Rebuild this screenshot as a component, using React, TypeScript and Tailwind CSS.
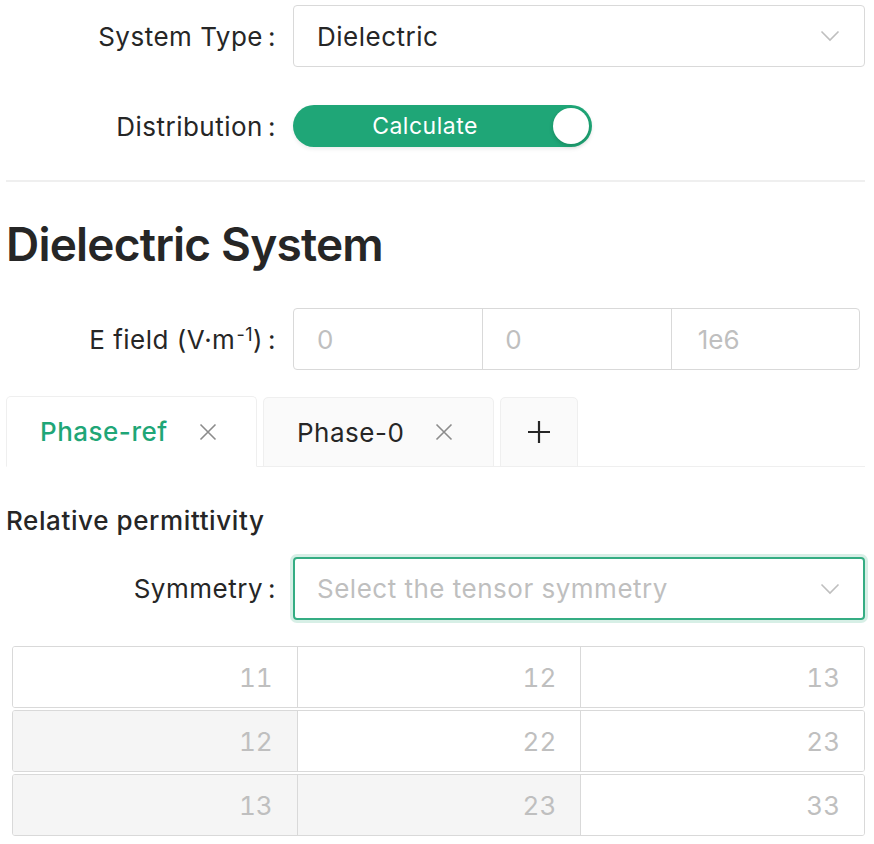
import React from "react";

const font = { fontFamily: "Inter, 'Noto Sans', 'Liberation Sans', sans-serif" };

function Chevron() {
  return (
    <svg width="20" height="12" viewBox="0 0 20 12" className="shrink-0">
      <polyline points="1.5,1.5 10,10 18.5,1.5" fill="none" stroke="#bfbfbf" strokeWidth="1.6" />
    </svg>
  );
}

function CloseX({ color = "#8c8c8c" }: { color?: string }) {
  return (
    <svg width="18" height="18" viewBox="0 0 18 18" className="shrink-0">
      <path d="M1.5 1.5 L16.5 16.5 M16.5 1.5 L1.5 16.5" stroke={color} strokeWidth="1.6" fill="none" />
    </svg>
  );
}

function Plus() {
  return (
    <svg width="24" height="24" viewBox="0 0 24 24">
      <path d="M12 1 V23 M1 12 H23" stroke="#262626" strokeWidth="2.2" fill="none" />
    </svg>
  );
}

function Label({ children }: { children: React.ReactNode }) {
  return (
    <div className="w-[287px] shrink-0 flex justify-end items-center pr-[17px] text-[26px] tracking-[0.5px] text-[#262626]">
      <span>{children}</span>
      <span className="ml-[5px]">:</span>
    </div>
  );
}

export default function App() {
  const rows = [
    [
      { v: "11", d: false },
      { v: "12", d: false },
      { v: "13", d: false },
    ],
    [
      { v: "12", d: true },
      { v: "22", d: false },
      { v: "23", d: false },
    ],
    [
      { v: "13", d: true },
      { v: "23", d: true },
      { v: "33", d: false },
    ],
  ];
  return (
    <div style={font} className="w-[874px] h-[844px] bg-white pl-[6px] pr-[9px] pt-[5px] text-[#262626] overflow-hidden">
      {/* System type */}
      <div className="flex items-center h-[62px]">
        <Label>System Type</Label>
        <div className="flex-1 h-[62px] border border-[#d9d9d9] rounded-[4px] flex items-center justify-between pl-[23px] pr-[24px] text-[26px] tracking-[0.5px]">
          <span>Dielectric</span>
          <Chevron />
        </div>
      </div>

      {/* Distribution */}
      <div className="flex items-center mt-[38px] h-[42px]">
        <Label>Distribution</Label>
        <div className="w-[299px] h-[42px] rounded-full bg-[#1fa677] flex items-center pl-[4px] pr-[3px] shadow-[0_2px_4px_rgba(0,0,0,0.08)]">
          <div className="flex-1 text-center text-white text-[23px] tracking-[0.5px]">Calculate</div>
          <div className="w-[36px] h-[36px] rounded-full bg-white shadow-[0_2px_4px_rgba(0,35,11,0.2)]" />
        </div>
      </div>

      {/* Divider */}
      <div className="mt-[33px] h-[2px] bg-[#efefef]" />

      {/* Heading */}
      <h1 className="mt-[34px] text-[46px] leading-[56px] font-semibold text-[#262626] tracking-[-0.8px]">Dielectric System</h1>

      {/* E field */}
      <div className="flex items-center mt-[36px] h-[62px] pr-[5px]">
        <Label>
          E field (V·m<sup className="text-[18px] leading-none relative top-[-8px] ml-[1px]">-1</sup>)
        </Label>
        <div className="flex-1 h-[62px] border border-[#d9d9d9] rounded-[4px] grid grid-cols-3 text-[26px] text-[#bfbfbf]">
          <div className="flex items-center pl-[23px]">0</div>
          <div className="flex items-center pl-[22px] border-l border-[#d9d9d9]">0</div>
          <div className="flex items-center pl-[26px] border-l border-[#d9d9d9]">1e6</div>
        </div>
      </div>

      {/* Tabs */}
      <div className="mt-[26px] relative flex items-end gap-[6px] h-[71px]">
        <div className="absolute left-0 right-0 bottom-0 h-[1px] bg-[#efefef]" />
        <div className="relative z-10 w-[251px] h-[71px] bg-white border border-[#efefef] border-b-white rounded-t-[5px] flex items-center pl-[33px] gap-[31px]">
          <span className="text-[26px] tracking-[0.5px] text-[#1fa677] font-medium">Phase-ref</span>
          <CloseX />
        </div>
        <div className="relative w-[231px] h-[70px] bg-[#fafafa] border border-[#efefef] rounded-t-[5px] flex items-center pl-[33px] gap-[31px]">
          <span className="text-[26px] tracking-[0.5px] text-[#262626]">Phase-0</span>
          <CloseX />
        </div>
        <div className="relative w-[78px] h-[70px] bg-[#fafafa] border border-[#efefef] rounded-t-[5px] flex items-center justify-center">
          <Plus />
        </div>
      </div>

      {/* Relative permittivity */}
      <div className="mt-[38px] text-[26px] tracking-[0.6px] font-medium leading-[32px]">Relative permittivity</div>

      {/* Symmetry */}
      <div className="flex items-center mt-[20px] h-[63px]">
        <Label>Symmetry</Label>
        <div className="flex-1 h-[63px] border-2 border-[#35ad83] rounded-[4px] shadow-[0_0_0_3px_rgba(31,166,119,0.18)] flex items-center justify-between pl-[22px] pr-[23px] text-[26px] tracking-[0.5px]">
          <span className="text-[#bfbfbf]">Select the tensor symmetry</span>
          <Chevron />
        </div>
      </div>

      {/* Table */}
      <div className="mt-[26px] ml-[6px] flex flex-col gap-[2px]">
        {rows.map((row, i) => (
          <div key={i} className="h-[62px] border border-[#d9d9d9] rounded-[3px] grid grid-cols-3 overflow-hidden">
            {row.map((c, j) => (
              <div
                key={j}
                className={`flex items-center justify-end pr-[24px] text-[26px] tabular-nums text-[#bfbfbf] ${j > 0 ? "border-l border-[#d9d9d9]" : ""} ${c.d ? "bg-[#f5f5f5]" : "bg-white"}`}
              >
                {c.v}
              </div>
            ))}
          </div>
        ))}
      </div>
    </div>
  );
}
